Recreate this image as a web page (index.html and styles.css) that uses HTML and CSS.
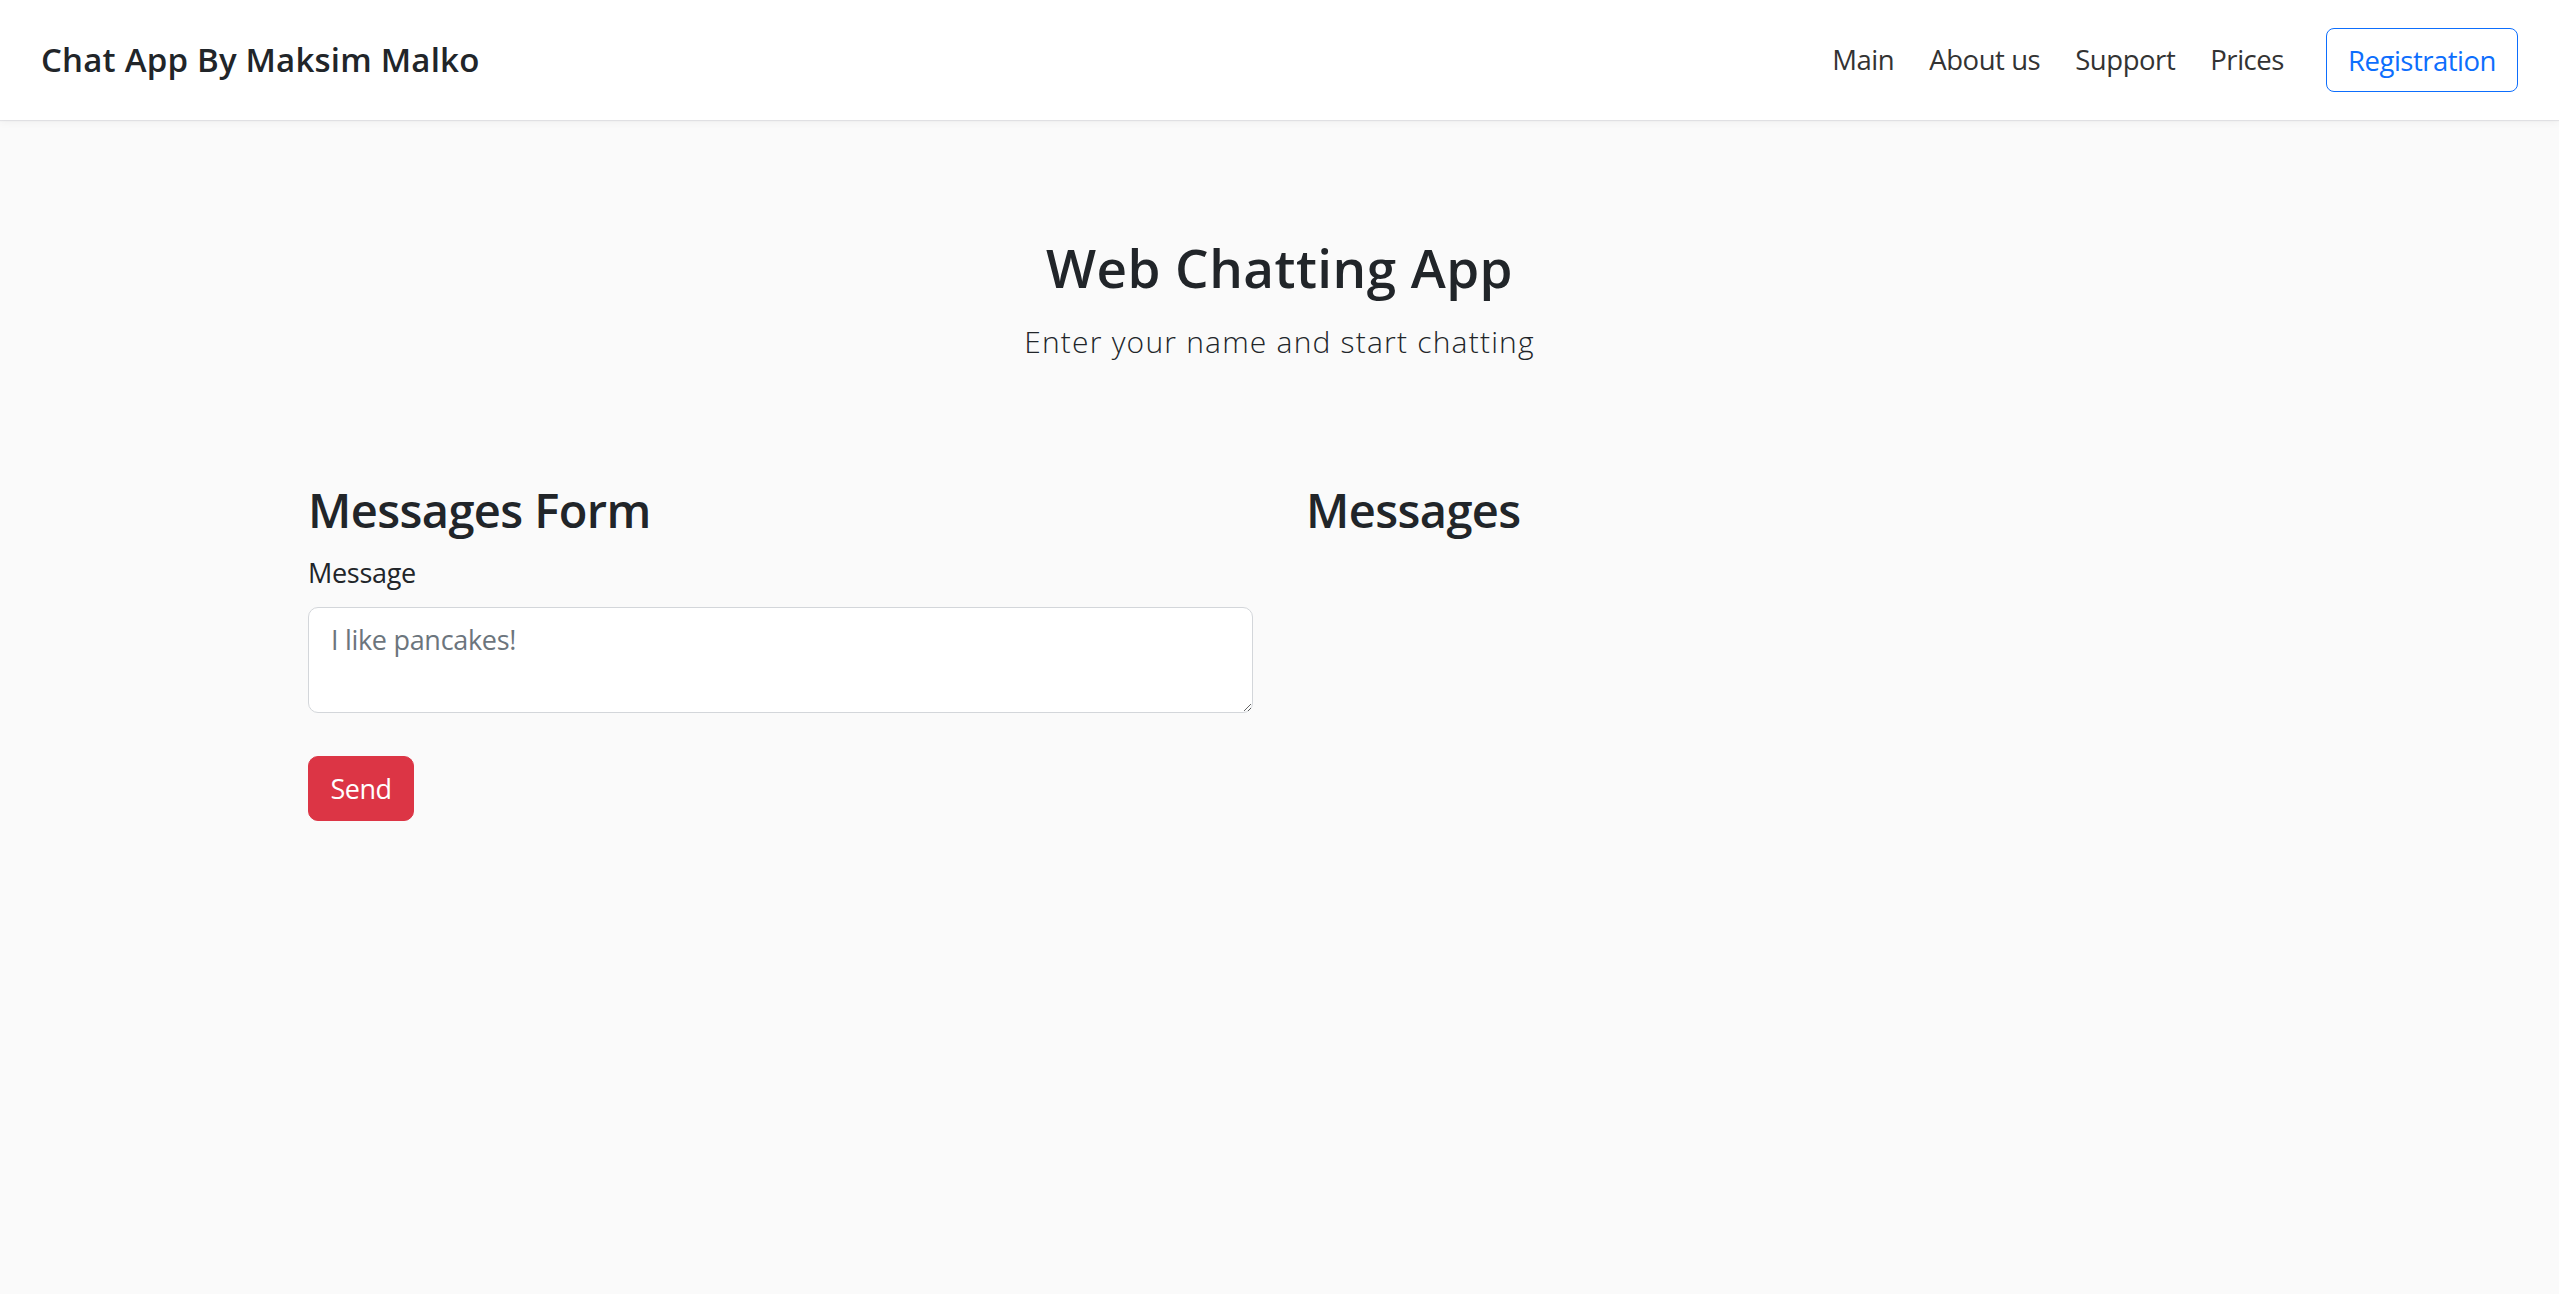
FILE: index.html
```html
<!DOCTYPE html>
<html lang="en">
<head>
<meta charset="utf-8">
<title>Chat App By Maksim Malko</title>
<link rel="stylesheet" href="styles.css">
</head>
<body>
<header class="navbar">
  <a class="brand" href="#">Chat App By Maksim Malko</a>
  <nav class="nav-right">
    <ul class="nav-links">
      <li><a href="#">Main</a></li>
      <li><a href="#">About us</a></li>
      <li><a href="#">Support</a></li>
      <li><a href="#">Prices</a></li>
    </ul>
    <a class="btn-outline" href="#">Registration</a>
  </nav>
</header>
<main>
  <section class="hero">
    <h1 class="hero-title">Web Chatting App</h1>
    <p class="lead">Enter your name and start chatting</p>
  </section>
  <section class="chat">
    <div class="col">
      <h2 class="col-title">Messages Form</h2>
      <form class="form">
        <label class="label" for="msg">Message</label>
        <textarea id="msg" class="textarea" placeholder="I like pancakes!"></textarea>
        <button type="button" class="btn-send">Send</button>
      </form>
    </div>
    <div class="col">
      <h2 class="col-title">Messages</h2>
    </div>
  </section>
</main>
</body>
</html>
```
FILE: styles.css
```css
* { box-sizing: border-box; }
html, body { margin: 0; padding: 0; }
body {
  background: #fafafa;
  color: #212529;
  font-family: "Open Sans", "Noto Sans", sans-serif;
  min-height: 1294px;
}
a { text-decoration: none; }

.navbar {
  height: 120px;
  background: #ffffff;
  display: flex;
  align-items: center;
  justify-content: space-between;
  padding: 0 41px 0 41px;
  box-shadow: 0 1px 1px rgba(0, 0, 40, 0.08), 0 3px 8px rgba(0, 0, 0, 0.04);
  position: relative;
}
.brand {
  font-size: 33px;
  line-height: 40px;
  font-weight: 600;
  color: #212529;
  letter-spacing: 0.2px;
}
.nav-right {
  display: flex;
  align-items: center;
}
.nav-links {
  display: flex;
  list-style: none;
  margin: 0;
  padding: 0;
  gap: 35px;
}
.nav-links a {
  font-size: 27.5px;
  line-height: 40px;
  color: #333333;
  letter-spacing: -0.45px;
}
.btn-outline {
  margin-left: 42px;
  height: 64px;
  width: 192px;
  display: flex;
  align-items: center;
  justify-content: center;
  border: 1px solid #0d6efd;
  border-radius: 8px;
  color: #0d6efd;
  font-size: 27.5px;
  letter-spacing: -0.5px;
}

.hero {
  padding-top: 116px;
  text-align: center;
}
.hero-title {
  margin: 0 0 21px;
  font-size: 53px;
  line-height: 64px;
  font-weight: 600;
  letter-spacing: 0.45px;
}
.lead {
  margin: 0;
  font-size: 30px;
  line-height: 42px;
  font-weight: 300;
  letter-spacing: 1.2px;
}

.chat {
  margin-top: 117px;
  padding: 0 308px;
  display: flex;
  gap: 53px;
}
.col {
  flex: 1 1 0;
  min-width: 0;
}
.col-title {
  margin: 0 0 12px;
  font-size: 47px;
  line-height: 60px;
  font-weight: 600;
  letter-spacing: -0.6px;
}
.form {
  display: flex;
  flex-direction: column;
  align-items: flex-start;
}
.label {
  font-size: 27px;
  line-height: 42px;
  margin-bottom: 13px;
  letter-spacing: -0.3px;
}
.textarea {
  width: 100%;
  height: 106px;
  border: 1px solid #d3d6da;
  border-radius: 10px;
  background: #ffffff;
  padding: 11px 22px;
  font-family: inherit;
  font-size: 27px;
  line-height: 42px;
  color: #212529;
  resize: vertical;
  letter-spacing: -0.3px;
}
.textarea::placeholder { color: #6c757d; }
.btn-send {
  margin-top: 43px;
  width: 106px;
  height: 65px;
  border: 1px solid #dc3545;
  border-radius: 10px;
  background: #dc3545;
  color: #ffffff;
  font-family: inherit;
  font-size: 27px;
  line-height: 42px;
  padding: 0;
  letter-spacing: -0.5px;
}
```
